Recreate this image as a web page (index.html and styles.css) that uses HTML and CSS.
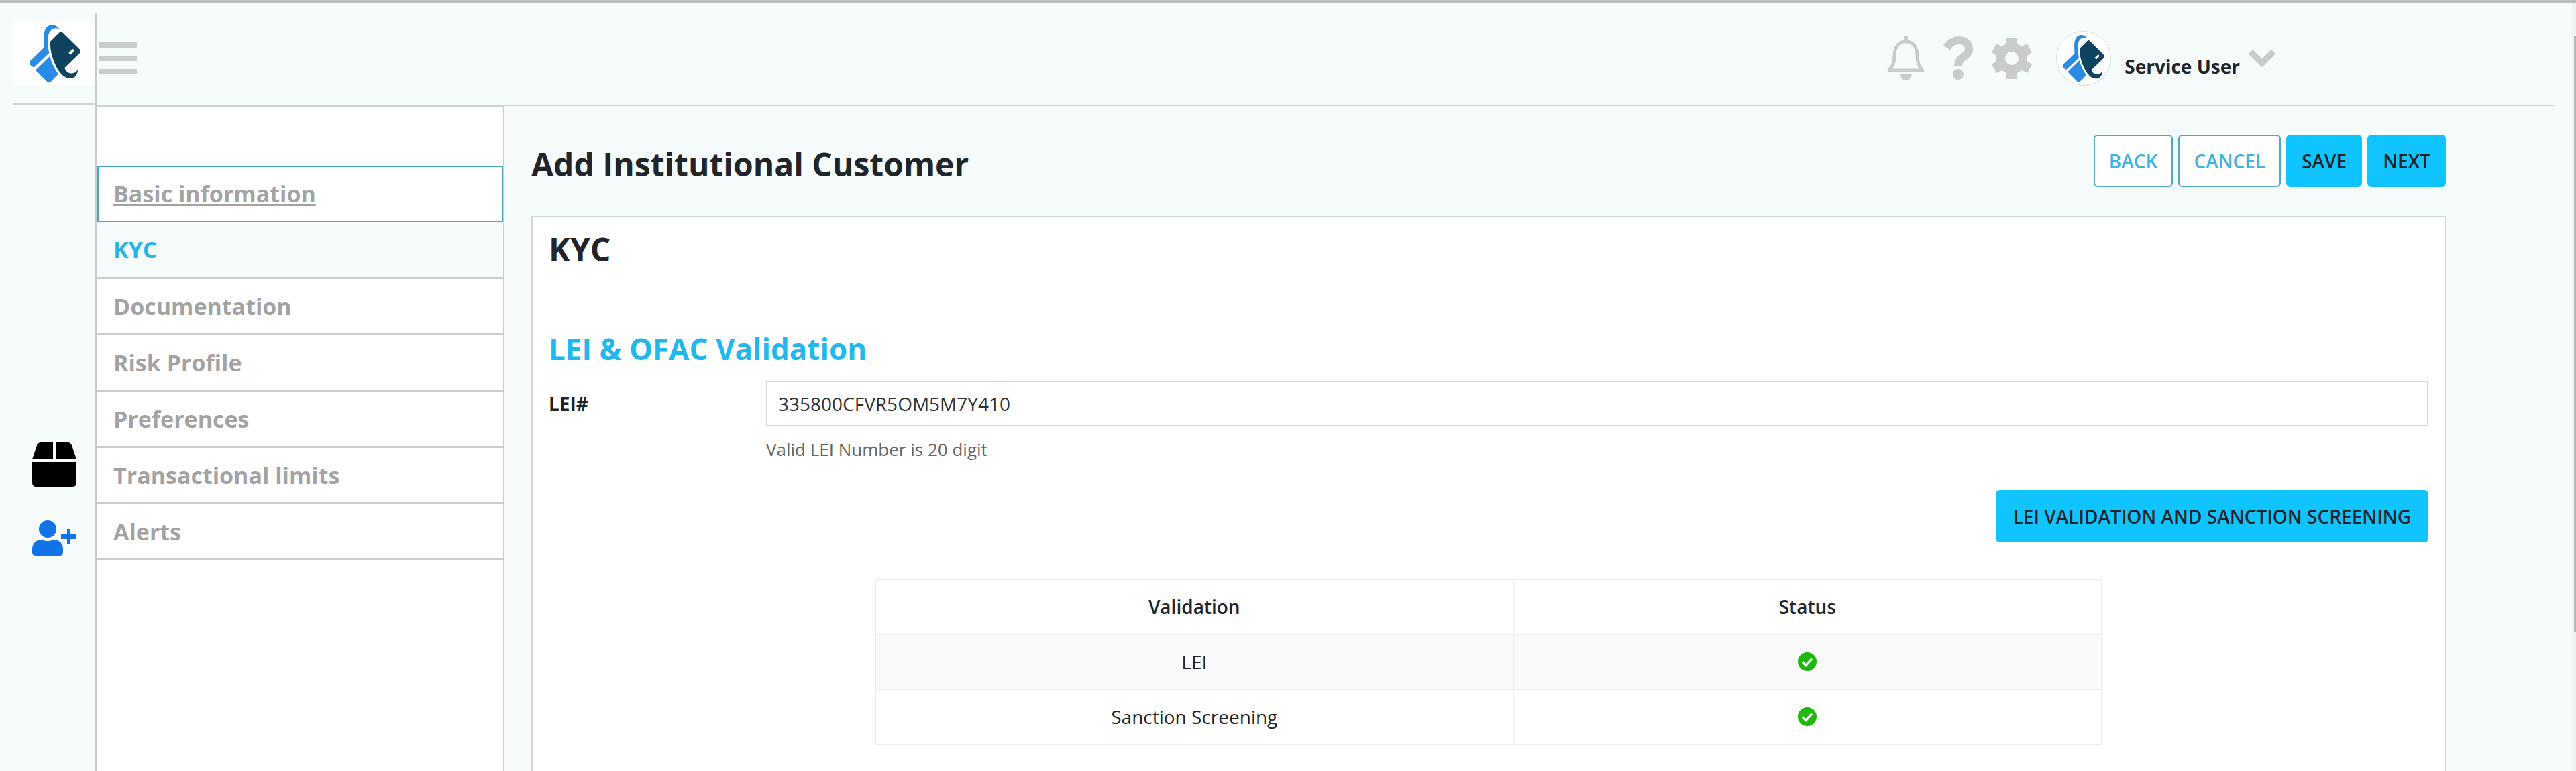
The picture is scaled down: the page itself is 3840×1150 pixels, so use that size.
FILE: index.html
```html
<!DOCTYPE html>
<html lang="en">
<head>
    <meta charset="UTF-8">
    <meta name="viewport" content="width=device-width, initial-scale=1.0">
    <title>Add Institutional Customer</title>
    <link rel="stylesheet" href="styles.css">
</head>
<body>
    <!-- Shared shapes -->
    <svg class="shapes" width="0" height="0" aria-hidden="true">
        <symbol id="logo" viewBox="68 106 236 266">
            <path fill="#2a8be6" d="M206 127 Q190 108 168 110 C142 114 132 145 135 180 L136 212 L74 272 Q68 282 74 290 L90 302 L160 236 Q152 205 154 170 C156 135 175 118 206 127 Z"/>
            <path fill="#2a8be6" d="M98 314 L163 250 Q174 295 201 331 L166 367 Q158 373 150 366 Z"/>
            <path fill="#0d435f" d="M165 184 L206 143 Q213 136 220 143 L299 221 Q304 228 299 235 L229 303 Q237 327 258 328 Q282 328 289 309 C289 335 275 351 253 351 C225 349 205 324 190 294 C172 258 163 220 165 184 Z"/>
            <path fill="#fff" d="M248 234 L266 218 Q271 219 274 226 L258 243 Q250 244 248 234 Z"/>
        </symbol>
        <symbol id="check" viewBox="0 0 28 28">
            <circle cx="14" cy="14" r="14" fill="#1fb80c"/>
            <path d="M7 14.500 L12 19.500 L21 9.500" fill="none" stroke="#fff" stroke-width="3.500"/>
        </symbol>
    </svg>

    <div class="app">
        <aside class="rail">
            <a class="brand" href="#" aria-label="Home"><svg class="brand-logo"><use href="#logo"/></svg></a>
            <div class="rail-links">
                <a href="#" aria-label="Products">
                    <svg width="66" height="66" viewBox="0 0 66 66">
                        <path d="M31 0 V25 H0 L7 4 Q9 0 13 0 Z M35 0 H53 Q57 0 59 4 L66 25 H35 Z M0 29 H66 V60 Q66 66 60 66 H6 Q0 66 0 60 Z"/>
                    </svg>
                </a>
                <a href="#" aria-label="Add customer">
                    <svg width="66" height="54" viewBox="0 0 66 54" fill="#1272e8">
                        <circle cx="23" cy="13" r="13"/>
                        <path d="M14 29 Q23 33 32 29 Q46 30 46 44 V48 Q46 53 41 53 H5 Q0 53 0 48 V44 Q0 30 14 29 Z"/>
                        <path d="M52 13 H57 V21 H66 V28 H57 V36 H52 V28 H43 V21 H52 Z"/>
                    </svg>
                </a>
            </div>
        </aside>

        <div class="content">
            <header class="topbar">
                <button class="icon-btn" type="button" aria-label="Toggle menu">
                    <svg width="56" height="48" viewBox="0 0 56 48"><path d="M0 0 H56 V8 H0 Z M0 20 H56 V28 H0 Z M0 40 H56 V48 H0 Z"/></svg>
                </button>
                <div class="tools">
                    <button class="icon-btn" type="button" aria-label="Notifications">
                        <svg width="56" height="66" viewBox="0 0 56 66">
                            <path fill="none" stroke="#c9cbcc" stroke-width="5" stroke-linejoin="round" d="M28 8 C16 8 11 18 11 29 C11 40 8 45 3 51 H53 C48 45 45 40 45 29 C45 18 40 8 28 8 Z"/>
                            <path d="M25 0 H31 V8 H25 Z M19 57 H37 Q34 66 28 66 Q22 66 19 57 Z"/>
                        </svg>
                    </button>
                    <button class="icon-btn" type="button" aria-label="Help">
                        <svg width="44" height="66" viewBox="0 0 44 66">
                            <path fill="none" stroke="#c9cbcc" stroke-width="12" d="M5 17 Q12 6 23 6 C33 6 38 12 38 19 C38 31 22 30 22 44"/>
                            <circle cx="22" cy="57" r="8"/>
                        </svg>
                    </button>
                    <button class="icon-btn" type="button" aria-label="Settings">
                        <svg width="60" height="62" viewBox="0 0 60 62">
                            <path fill-rule="evenodd" d="M22 0 H38 V9 L45 13 L53 9 L60 22 L53 27 V35 L60 40 L53 53 L45 49 L38 53 V62 H22 V53 L15 49 L7 53 L0 40 L7 35 V27 L0 22 L7 9 L15 13 L22 9 Z M30 21 A10 10 0 1 0 30 41 A10 10 0 1 0 30 21 Z"/>
                        </svg>
                    </button>
                    <button class="user" type="button">
                        <span class="avatar"><svg class="avatar-logo"><use href="#logo"/></svg></span>
                        <span class="user-name">Service User</span>
                        <svg class="chevron" width="42" height="28" viewBox="0 0 42 28"><path fill="none" stroke="#c9cbcc" stroke-width="9" d="M4 4 L21 21 L38 4"/></svg>
                    </button>
                </div>
            </header>

            <div class="page">
                <nav class="steps">
                    <a class="focused" href="#">Basic information</a>
                    <a class="active" href="#">KYC</a>
                    <a href="#">Documentation</a>
                    <a href="#">Risk Profile</a>
                    <a href="#">Preferences</a>
                    <a href="#">Transactional limits</a>
                    <a href="#">Alerts</a>
                </nav>

                <main class="main">
                    <div class="title-row">
                        <h1>Add Institutional Customer</h1>
                        <div class="actions">
                            <button class="btn outline" type="button">BACK</button>
                            <button class="btn outline" type="button">CANCEL</button>
                            <button class="btn" type="button">SAVE</button>
                            <button class="btn" type="button">NEXT</button>
                        </div>
                    </div>

                    <section class="panel">
                        <h2>KYC</h2>
                        <h3>LEI &amp; OFAC Validation</h3>

                        <div class="field">
                            <label for="lei">LEI#</label>
                            <div class="field-body">
                                <input id="lei" type="text" value="335800CFVR5OM5M7Y410">
                                <small>Valid LEI Number is 20 digit</small>
                            </div>
                        </div>

                        <div class="screening">
                            <button class="btn" type="button">LEI VALIDATION AND SANCTION SCREENING</button>
                        </div>

                        <table class="results">
                            <thead>
                                <tr><th class="col-name">Validation</th><th>Status</th></tr>
                            </thead>
                            <tbody>
                                <tr><td>LEI</td><td><svg class="check" role="img" aria-label="Valid"><use href="#check"/></svg></td></tr>
                                <tr><td>Sanction Screening</td><td><svg class="check" role="img" aria-label="Valid"><use href="#check"/></svg></td></tr>
                            </tbody>
                        </table>
                    </section>
                </main>
            </div>
        </div>
    </div>
    <div class="scroll-track"><div class="scroll-thumb"></div></div>
</body>
</html>
```
FILE: styles.css
```css
* {
    box-sizing: border-box;
}

body {
    margin: 0;
    border-top: 4px solid #b9c0c0;
    background-color: #f6fcfc;
    color: #212529;
    font-family: "Open Sans", "Noto Sans", sans-serif;
    font-size: 28px;
}

a {
    color: inherit;
    text-decoration: none;
}

button,
input {
    font: inherit;
}

svg {
    display: block;
}

.shapes {
    position: absolute;
}

.app {
    display: flex;
    min-height: calc(100vh - 4px);
    padding: 16px 32px 0 20px;
}

/* Left icon rail */
.rail {
    display: flex;
    flex-direction: column;
    width: 122px;
    flex-shrink: 0;
    padding-top: 13px;
}

.brand {
    height: 123px;
    border-bottom: 2px solid #ced4d4;
}

.brand-logo {
    width: 118px;
    height: 94px;
    padding: 3px 17px 3px 23px;
    background-color: #fff;
}

.rail-links {
    display: flex;
    flex-direction: column;
    align-items: center;
    gap: 50px;
    padding-top: 504px;
}

/* Header */
.content {
    display: flex;
    flex-direction: column;
    flex: 1;
    border-left: 2px solid #c8cccd;
}

.topbar {
    display: flex;
    align-items: center;
    justify-content: space-between;
    height: 138px;
    padding: 0 415px 2px 4px;
    border-bottom: 2px solid #ced4d4;
}

.icon-btn,
.user {
    padding: 0;
    border: none;
    background: none;
    color: inherit;
    cursor: pointer;
}

.icon-btn {
    fill: #c9cbcc;
}

.tools,
.user {
    display: flex;
    align-items: center;
}

.tools {
    gap: 28px;
}

.user {
    margin-left: 8px;
}

.avatar {
    display: flex;
    align-items: center;
    justify-content: center;
    width: 82px;
    height: 82px;
    border: 1px solid #dcdcdc;
    border-radius: 50%;
    background-color: #fff;
}

.avatar-logo {
    width: 64px;
    height: 72px;
}

.user-name {
    padding: 24px 12px 0 20px;
    font-weight: 700;
}

/* Step navigation */
.page {
    display: flex;
    flex: 1;
}

.steps {
    width: 608px;
    flex-shrink: 0;
    padding-top: 87px;
    border: 2px solid #cdcdcd;
    border-bottom: none;
    border-left-width: 1px;
    background-color: #fff;
}

.steps a {
    display: flex;
    align-items: center;
    height: 84px;
    padding-left: 24px;
    border-top: 3px solid #cdcdcd;
    color: #a3a3a3;
    font-size: 34px;
    font-weight: 700;
}

.steps .focused {
    padding-left: 22px;
    border: 2px solid #45a9bd;
    text-decoration: underline;
}

.steps .active {
    height: 82px;
    border-top: none;
    background-color: #f6fcfc;
    color: #25b5e8;
}

.steps a:last-child {
    height: 87px;
    border-bottom: 3px solid #cdcdcd;
}

/* Main area */
.main {
    display: flex;
    flex-direction: column;
    flex: 1;
    padding: 43px 162px 0 40px;
}

.title-row {
    display: flex;
    justify-content: space-between;
    padding-bottom: 43px;
}

h1,
h2,
h3 {
    margin: 0;
    font-weight: 700;
    line-height: 64px;
}

h1,
h2 {
    font-size: 48px;
}

h1 {
    padding-top: 12px;
}

h3 {
    padding-top: 84px;
    color: #22b8ee;
    font-size: 44px;
}

.actions {
    display: flex;
    gap: 8px;
}

.btn {
    height: 78px;
    padding: 0 21px;
    border: 2px solid #10c4ff;
    border-radius: 6px;
    background-color: #10c4ff;
    color: #212529;
    font-weight: 600;
    cursor: pointer;
}

.outline {
    border-color: #4badc4;
    background-color: #fff;
    color: #3fb2e0;
}

.panel {
    flex: 1;
    padding: 16px 24px;
    border: 2px solid #d2d7d7;
    border-bottom: none;
    background-color: #fff;
}

.field {
    display: flex;
    padding-top: 16px;
}

.field label {
    width: 324px;
    line-height: 68px;
    font-weight: 700;
}

.field-body {
    flex: 1;
}

.field input {
    display: block;
    width: 100%;
    height: 68px;
    padding: 0 16px;
    border: 2px solid #d8d8d8;
    background-color: #fff;
    color: #333;
}

.field small {
    display: block;
    padding-top: 16px;
    color: #666;
    font-size: 26px;
    line-height: 36px;
}

.screening {
    display: flex;
    justify-content: flex-end;
    padding: 43px 0 54px;
}

.screening .btn {
    padding: 0 24px;
}

.results {
    width: 1830px;
    max-width: 100%;
    margin: 0 auto;
    border-collapse: collapse;
    text-align: center;
}

.results th,
.results td {
    height: 82px;
    padding: 0;
    border: 2px solid #ededed;
}

.results th {
    font-weight: 600;
}

.col-name {
    width: 52%;
}

.results tbody tr:nth-child(odd) {
    background-color: #fafafa;
}

.check {
    width: 28px;
    height: 28px;
    margin: 0 auto;
}

/* Page scrollbar */
.scroll-track {
    position: fixed;
    top: 4px;
    right: 0;
    bottom: 0;
    width: 6px;
    padding-top: 50px;
    background-color: #f0f3f3;
}

.scroll-thumb {
    width: 3px;
    height: 81%;
    margin-left: auto;
    background-color: #b5b9b9;
}
```
